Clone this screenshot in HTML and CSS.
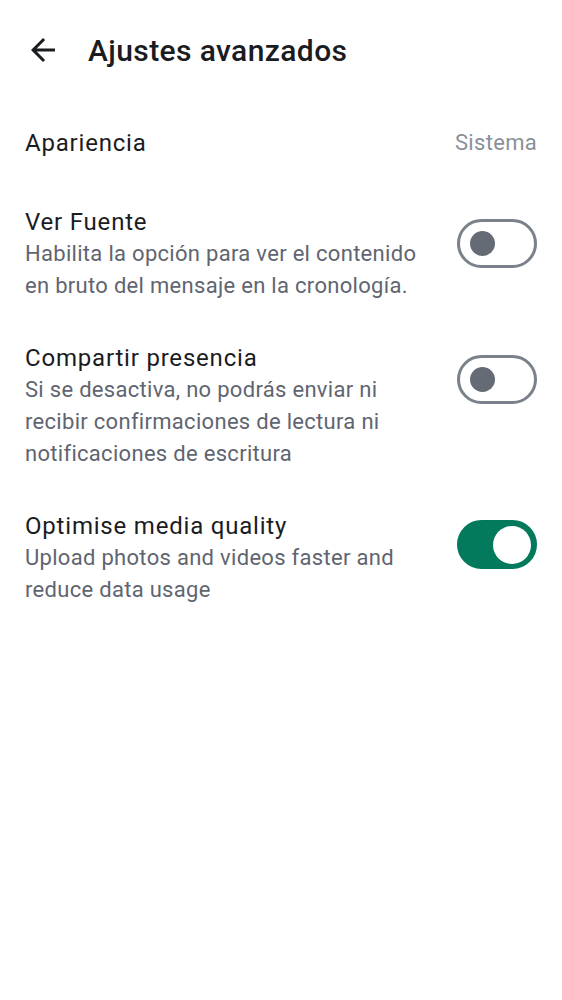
FILE: index.html
```html
<!DOCTYPE html>
<html lang="es">
<head>
<meta charset="utf-8">
<link rel="stylesheet" href="styles.css">
</head>
<body>
<header class="topbar">
  <button class="back" aria-label="Atrás">
    <svg viewBox="0 0 24 24" width="36" height="36"><path d="M20 11H7.83l5.59-5.59L12 4l-8 8 8 8 1.41-1.41L7.83 13H20v-2z" fill="#1b1c1f"/></svg>
  </button>
  <h1 class="title">Ajustes avanzados</h1>
</header>
<main class="list">
  <div class="row row-simple">
    <div class="label">Apariencia</div>
    <div class="value">Sistema</div>
  </div>
  <div class="row">
    <div class="text">
      <div class="label">Ver Fuente</div>
      <div class="desc">Habilita la opción para ver el contenido en bruto del mensaje en la cronología.</div>
    </div>
    <div class="switch"><span class="thumb"></span></div>
  </div>
  <div class="row">
    <div class="text">
      <div class="label">Compartir presencia</div>
      <div class="desc">Si se desactiva, no podrás enviar ni recibir confirmaciones de lectura ni notificaciones de escritura</div>
    </div>
    <div class="switch"><span class="thumb"></span></div>
  </div>
  <div class="row">
    <div class="text">
      <div class="label">Optimise media quality</div>
      <div class="desc">Upload photos and videos faster and reduce data usage</div>
    </div>
    <div class="switch on"><span class="thumb"></span></div>
  </div>
</main>
</body>
</html>
```
FILE: styles.css
```css
* { box-sizing: border-box; }
body {
  margin: 0;
  background: #ffffff;
  font-family: Roboto, "Noto Sans", sans-serif;
  color: #1b1c1f;
}
.topbar {
  height: 100px;
  display: flex;
  align-items: center;
  padding: 0 0 0 25px;
}
.back {
  width: 36px;
  height: 36px;
  padding: 0;
  border: 0;
  background: none;
  display: flex;
  margin-right: 27px;
}
.title {
  margin: 0;
  font-size: 30px;
  font-weight: 500;
  color: #1b1c1f;
  letter-spacing: 0.4px;
}
.list {
  padding: 0 25px;
}
.row {
  display: flex;
  justify-content: space-between;
  padding: 20px 0;
}
.row-simple {
  align-items: center;
  padding: 27px 0;
}
.text {
  flex: 1;
  padding-right: 28px;
}
.label {
  font-size: 24px;
  line-height: 32px;
  letter-spacing: 0.8px;
  color: #1b1c1f;
}
.value {
  font-size: 22px;
  line-height: 32px;
  letter-spacing: 0.3px;
  color: #8a9099;
}
.desc {
  font-size: 22px;
  line-height: 32px;
  letter-spacing: 0.3px;
  color: #5f6570;
}
.switch {
  flex: none;
  margin-top: 13px;
  width: 80px;
  height: 49px;
  border: 3px solid #7b818b;
  border-radius: 25px;
  display: flex;
  align-items: center;
  padding-left: 10px;
}
.thumb {
  width: 25px;
  height: 25px;
  border-radius: 50%;
  background: #646b75;
}
.switch.on {
  background: #047a5c;
  border-color: #047a5c;
  justify-content: flex-end;
  padding: 0 3px 0 0;
  margin-top: 10px;
}
.switch.on .thumb {
  width: 38px;
  height: 38px;
  background: #ffffff;
}
```
